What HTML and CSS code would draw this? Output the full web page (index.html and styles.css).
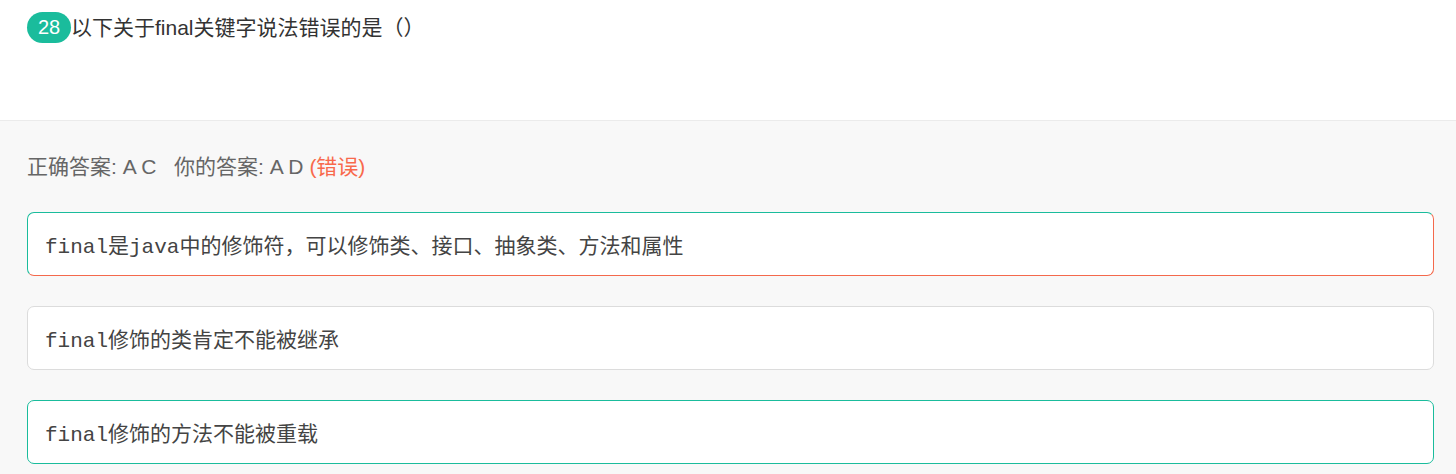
FILE: index.html
```html
<!DOCTYPE html>
<html lang="zh-CN">
<head>
<meta charset="utf-8">
<title>题目 28</title>
<link rel="stylesheet" href="styles.css">
</head>
<body>
<section class="question">
  <div class="q-head">
    <span class="q-num">28</span>
    <span class="q-title">以下关于final关键字说法错误的是（）</span>
  </div>
</section>
<section class="answers">
  <div class="result">正确答案: A C&nbsp;&nbsp;&nbsp;你的答案: A D <span class="wrong">(错误)</span></div>
  <div class="options">
    <div class="option option-mixed">final是java中的修饰符，可以修饰类、接口、抽象类、方法和属性</div>
    <div class="option">final修饰的类肯定不能被继承</div>
    <div class="option option-correct">final修饰的方法不能被重载</div>
  </div>
</section>
</body>
</html>
```

FILE: styles.css
```css
html, body {
  margin: 0;
  padding: 0;
  background: #f8f8f8;
}

body {
  font-family: "Liberation Sans", "Noto Sans CJK SC", sans-serif;
  color: #333;
}

.question {
  background: #fff;
  height: 121px;
  box-sizing: border-box;
  padding: 12px 27px 0;
  border-bottom: 1px solid #ebebeb;
}

.q-head {
  display: flex;
  align-items: center;
  height: 31px;
}

.q-num {
  display: inline-flex;
  align-items: center;
  justify-content: center;
  width: 44px;
  height: 31px;
  border-radius: 16px;
  background: #1abc9c;
  color: #fff;
  font-size: 20px;
}

.q-title {
  font-size: 21px;
  color: #333;
  line-height: 31px;
}

.answers {
  padding: 27px 22px 12px 27px;
}

.result {
  font-size: 21px;
  line-height: 38px;
  color: #666;
  margin-bottom: 26px;
}

.wrong {
  color: #f8694c;
}

.options {
  display: flex;
  flex-direction: column;
  gap: 30px;
}

.option {
  height: 64px;
  box-sizing: border-box;
  border: 1px solid #dcdcdc;
  border-radius: 7px;
  background: #fff;
  padding: 0 17px;
  display: flex;
  align-items: center;
  font-family: "Liberation Mono", "Noto Sans CJK SC", monospace;
  font-size: 21px;
  color: #444;
}

.option-mixed {
  border-color: #1abc9c #f4694c #f4694c #1abc9c;
}

.option-correct {
  border-color: #1abc9c;
}
```
